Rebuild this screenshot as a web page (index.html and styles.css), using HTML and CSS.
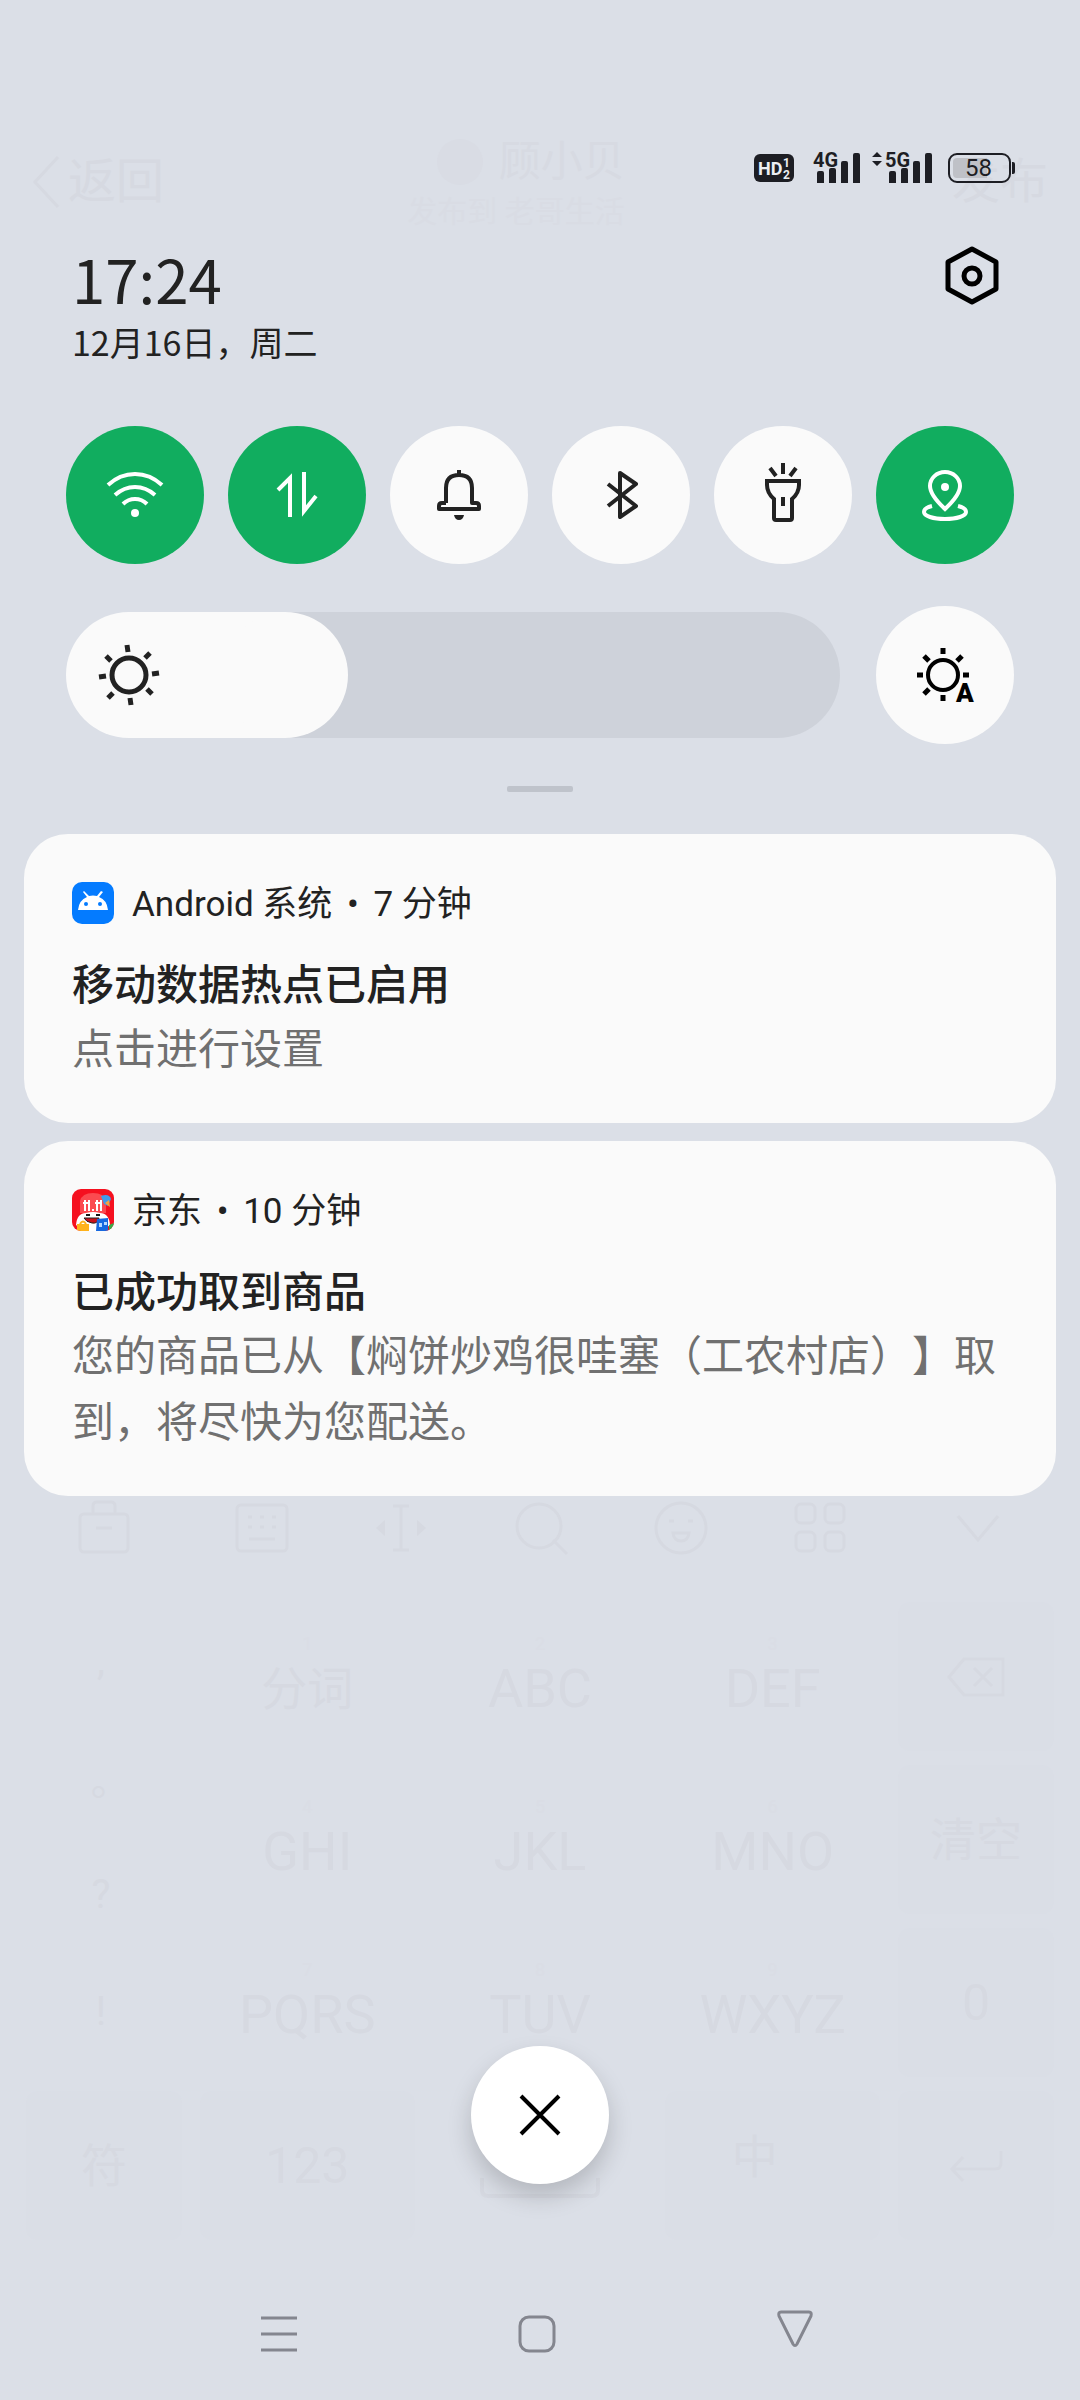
FILE: index.html
```html
<!DOCTYPE html>
<html lang="zh-CN">
<head>
<meta charset="utf-8">
<meta name="viewport" content="width=device-width, initial-scale=1">
<title>通知中心</title>
<link rel="stylesheet" href="styles.css">
</head>
<body>
<div class="screen">

  <!-- The app behind the shade, almost fully veiled -->
  <div class="underlay" aria-hidden="true">
    <div class="app-bar">
      <div class="app-back">
        <svg width="28" height="54" viewBox="0 0 28 54"><path d="M26 2L3 27l23 25" fill="none" stroke="currentColor" stroke-width="3"/></svg>
        <span>返回</span>
      </div>
      <div class="app-title">
        <div class="app-name"><span class="avatar"></span><span>顾小贝</span></div>
        <div class="app-sub">发布到 老哥生活</div>
      </div>
      <div class="app-post">发布</div>
    </div>

    <div class="keyboard">
      <div class="tools">
        <svg viewBox="0 0 56 56"><rect x="4" y="14" width="48" height="38" rx="4"/><path d="M17 14V6q0-4 4-4h14q4 0 4 4v8M20 28h16"/></svg>
        <svg viewBox="0 0 56 56"><rect x="3" y="5" width="50" height="46" rx="4"/><path d="M14 17h4M26 17h4M38 17h4M14 27h4M26 27h4M38 27h4M15 39h26"/></svg>
        <svg viewBox="0 0 56 56"><path d="M20 6h16M28 6v44M20 50h16"/><path d="M12 20l-9 8 9 8zM44 20l9 8-9 8z" fill="currentColor" stroke="none"/></svg>
        <svg viewBox="0 0 56 56"><circle cx="26" cy="26" r="22"/><path d="M40 40l14 14"/></svg>
        <svg viewBox="0 0 56 56"><circle cx="28" cy="28" r="25"/><path d="M16 21h5M35 21h5M20 33h16q-1 8-8 8t-8-8z"/></svg>
        <svg viewBox="0 0 56 56"><rect x="4" y="4" width="19" height="19" rx="5"/><rect x="33" y="4" width="19" height="19" rx="5"/><rect x="4" y="32" width="19" height="19" rx="5"/><rect x="33" y="32" width="19" height="19" rx="5"/></svg>
        <svg viewBox="0 0 56 56"><path d="M8 16l20 24 20-24"/></svg>
      </div>
      <div class="keys">
        <div class="marks"><span>,</span><span>｡</span><span>?</span><span>!</span></div>
        <div class="key"><small>1</small><span class="han">分词</span></div>
        <div class="key"><small>2</small><span>ABC</span></div>
        <div class="key"><small>3</small><span>DEF</span></div>
        <div class="key dark"><svg width="60" height="42" viewBox="0 0 60 42"><path d="M18 3h39v36H18L3 21zM28 12l18 18M46 12L28 30" fill="none" stroke="currentColor" stroke-width="3"/></svg></div>
        <div class="key"><small>4</small><span>GHI</span></div>
        <div class="key"><small>5</small><span>JKL</span></div>
        <div class="key"><small>6</small><span>MNO</span></div>
        <div class="key dark han">清空</div>
        <div class="key"><small>7</small><span>PQRS</span></div>
        <div class="key"><small>8</small><span>TUV</span></div>
        <div class="key"><small>9</small><span>WXYZ</span></div>
        <div class="key dark num">0</div>
        <div class="key dark han">符</div>
        <div class="key dark num">123</div>
        <div class="key space"><svg width="120" height="20" viewBox="0 0 120 20"><path d="M2 0v12q0 6 6 6h104q6 0 6-6V0" fill="none" stroke="currentColor" stroke-width="4"/></svg></div>
        <div class="key dark han lang">中</div>
        <div class="key dark"><svg width="54" height="34" viewBox="0 0 54 34"><path d="M52 2v12q0 6-6 6H4M14 8L3 20l11 12" fill="none" stroke="currentColor" stroke-width="3"/></svg></div>
      </div>
    </div>
  </div>

  <main class="shade">
    <div class="status">
      <svg width="40" height="28" viewBox="0 0 40 28" role="img" aria-label="HD 1 2">
        <rect width="40" height="28" rx="6" fill="#1d1e24"/>
        <text x="4" y="21" font-size="18" class="glyph light">HD</text>
        <text x="29" y="13" font-size="12" class="glyph light">1</text>
        <text x="29" y="25" font-size="12" class="glyph light">2</text>
      </svg>
      <svg class="signal-a" width="47" height="34" viewBox="0 0 47 34" role="img" aria-label="4G">
        <text x="0" y="16" font-size="20" class="glyph">4G</text>
        <path d="M4 22q0-2 2-2h3q2 0 2 2v10H4zM16 19q0-2 2-2h3q2 0 2 2v13h-7zM28 12q0-2 2-2h3q2 0 2 2v20h-7zM40 4q0-2 2-2h3q2 0 2 2v28h-7z"/>
      </svg>
      <svg class="signal-b" width="60" height="34" viewBox="0 0 60 34" role="img" aria-label="5G">
        <path d="M5 1l5 5H0zM5 15l5-5H0z"/>
        <text x="13" y="16" font-size="20" class="glyph">5G</text>
        <path d="M17 22q0-2 2-2h3q2 0 2 2v10h-7zM29 19q0-2 2-2h3q2 0 2 2v13h-7zM41 12q0-2 2-2h3q2 0 2 2v20h-7zM53 4q0-2 2-2h3q2 0 2 2v28h-7z"/>
      </svg>
      <svg width="68" height="30" viewBox="0 0 68 30" role="img" aria-label="电量 58">
        <path d="M9 5h30v20H9q-4 0-4-4V9q0-4 4-4z" fill="#bfc1c7"/>
        <rect x="1" y="1" width="61" height="28" rx="8" fill="none" stroke="#1d1e24" stroke-width="2"/>
        <path d="M64 9h1q2 0 2 2v8q0 2-2 2h-1z"/>
        <text x="17" y="23" font-size="24" class="level">58</text>
      </svg>
    </div>

    <header class="clock">
      <div>
        <div class="time">17:24</div>
        <div class="date">12月16日，周二</div>
      </div>
      <button class="settings" aria-label="设置">
        <svg width="54" height="60" viewBox="0 0 54 60" fill="none" stroke="#000" stroke-width="5" stroke-linejoin="round"><path d="M27 4l24 13v27L27 57 3 44V17z"/><circle cx="27" cy="31" r="8"/></svg>
      </button>
    </header>

    <div class="tiles">
      <button class="tile on" aria-label="WLAN" aria-pressed="true">
        <svg viewBox="0 0 60 60" stroke-width="4"><path d="M3 20q12-11 27-11t27 11M10 30q9-8 20-8t20 8M18 39q5-5 12-5t12 5"/><circle cx="30" cy="48" r="4" fill="currentColor" stroke="none"/></svg>
      </button>
      <button class="tile on" aria-label="移动数据" aria-pressed="true">
        <svg viewBox="0 0 60 60" stroke-width="4" stroke-miterlimit="6"><path d="M23 52V13L11 25M37 7v39l12-15"/></svg>
      </button>
      <button class="tile" aria-label="响铃" aria-pressed="false">
        <svg viewBox="0 0 60 60" stroke-width="4" stroke-linejoin="round"><path d="M30 5v4M17 38V23q0-13 13-13t13 13v15h4q3 0 3 3v3H10v-3q0-3 3-3h4"/><path d="M25 50h10q-1 5-5 5t-5-5z" fill="currentColor" stroke="none"/></svg>
      </button>
      <button class="tile" aria-label="蓝牙" aria-pressed="false">
        <svg viewBox="0 0 60 60" stroke-width="4" stroke-linejoin="round"><path d="M17 19l28 22-16 11V8l16 11-28 22"/></svg>
      </button>
      <button class="tile" aria-label="手电筒" aria-pressed="false">
        <svg viewBox="0 0 60 60" stroke-width="4"><path d="M30-2V9M17 3l6 8M43 3l-6 8M14 16h32v4q0 8-7 14v19q0 2-2 2H23q-2 0-2-2V34q-7-6-7-14zM30 32v9"/></svg>
      </button>
      <button class="tile on" aria-label="定位" aria-pressed="true">
        <svg viewBox="0 0 60 60" stroke-width="4"><path d="M30 44Q15 30 15 21a15 14 0 0 1 30 0q0 9-15 23zM17 41q-8 2-8 6c0 4 9 7 21 7s21-3 21-7q0-4-8-6"/><circle cx="30" cy="22" r="4" fill="currentColor" stroke="none"/></svg>
      </button>
    </div>

    <div class="brightness">
      <label class="slider">
        <svg viewBox="0 0 60 60" stroke-width="5" aria-hidden="true"><circle cx="30" cy="30" r="17"/><path d="M28 0l1 7M31 53l1 7M0 32l7-1M53 29l7-1M7 11l5 5M48 44l5 5M9 53l5-5M46 13l5-5"/></svg>
        <input type="range" min="0" max="100" value="24" aria-label="亮度">
      </label>
      <button class="tile auto" aria-label="自动亮度" aria-pressed="false">
        <svg viewBox="0 0 60 60" stroke-width="5"><circle cx="28" cy="30" r="15" stroke-width="4"/><path d="M28 3v6M28 50v6M2 30h6M48 30h6M9 11l5 5M9 49l5-5M47 11l-5 5"/><text x="41" y="57" font-size="26" class="mode">A</text></svg>
      </button>
    </div>

    <div class="handle"></div>

    <section class="cards">
      <article class="card">
        <div class="card-head">
          <svg width="42" height="42" viewBox="0 0 42 42" aria-hidden="true">
            <rect width="42" height="42" rx="10" fill="#047bff"/>
            <path d="M6 28q1-10 9-13l-4-5 1-1 5 5q4-1 8 0l4-5 2 1-4 5q8 3 9 13z" fill="#fff"/>
            <circle cx="14" cy="22" r="2" fill="#047bff"/><circle cx="28" cy="22" r="2" fill="#047bff"/>
          </svg>
          <span class="source">Android 系统 <span class="dot">•</span> 7 分钟</span>
        </div>
        <h2>移动数据热点已启用</h2>
        <p>点击进行设置</p>
      </article>
      <article class="card">
        <div class="card-head">
          <svg width="42" height="42" viewBox="0 0 42 42" aria-hidden="true">
            <clipPath id="jd"><rect width="42" height="42" rx="9"/></clipPath>
            <g clip-path="url(#jd)">
              <rect width="42" height="42" fill="#f5101f"/>
              <path d="M8 24V12Q10 4 21 4t13 8v12z" fill="#fb4a50"/>
              <path d="M29 7q8-3 10 3l-3 7-4-2z" fill="#3f9bea"/><path d="M33 14l4-3 1 7z" fill="#f8a33c"/>
              <path d="M13 11v11M17 11v11M25 11v11M29 11v11M11 14h7M23 14h7M20 21h2" fill="none" stroke="#fff" stroke-width="2"/>
              <path d="M4 36q1-12 10-12 7-2 14 0 9 0 10 12l-8 6H12z" fill="#fff"/>
              <path d="M14 26h4M24 26h4" stroke="#181818" stroke-width="2"/>
              <path d="M12 29h15q-1 6-7 5t-8-5z" fill="#c9131c" stroke="#222"/>
              <path d="M5 35h12v7H5z" fill="#ffb31c"/><path d="M8 35q3-5 6 0" fill="none" stroke="#ffb31c" stroke-width="2"/>
              <path d="M25 30l11-1v13H24z" fill="#1769e0"/><path d="M27 34h3v4h-3zM32 33h3v3h-3z" fill="#b8d9ff"/>
              <path d="M37 36l5-2v8h-5z" fill="#35ad48"/>
            </g>
          </svg>
          <span class="source">京东 <span class="dot">•</span> 10 分钟</span>
        </div>
        <h2>已成功取到商品</h2>
        <p>您的商品已从【焖饼炒鸡很哇塞（工农村店）】取到，将尽快为您配送。</p>
      </article>
    </section>

    <button class="clear" aria-label="清除全部通知">
      <svg width="42" height="42" viewBox="0 0 42 42"><path d="M2 2l38 38M40 2L2 40" stroke="#000" stroke-width="4"/></svg>
    </button>

    <nav class="nav" aria-label="系统导航">
      <button aria-label="最近任务"><svg viewBox="0 0 36 42"><path d="M0 5h36M0 21h36M0 37h36"/></svg></button>
      <button aria-label="主屏幕"><svg viewBox="0 0 36 42"><rect x="1" y="4" width="34" height="34" rx="9"/></svg></button>
      <button aria-label="返回"><svg viewBox="0 0 36 42"><path d="M4-1h28q3 0 2 4L20 31q-2 3-4 0L2 3Q1-1 4-1z"/></svg></button>
    </nav>
  </main>
</div>
</body>
</html>
```
FILE: styles.css
```css
:root {
  --bg: #dbdfe7;
  --ghost: #d6d9e1;
  --surface: #fafafa;
  --accent: #11ad5f;
  --ink: #222;
}

* { box-sizing: border-box; }

body {
  margin: 0;
  background: var(--bg);
  color: var(--ink);
  font-family: Roboto, "Noto Sans CJK SC", sans-serif;
}

button {
  border: 0;
  padding: 0;
  background: none;
  color: inherit;
  font: inherit;
}

svg { display: block; overflow: visible; flex: none; }

/* Both layers share one grid cell */
.screen {
  display: grid;
  grid-template-columns: minmax(0, 1fr);
  min-height: 100vh;
}
.underlay, .shade {
  grid-area: 1 / 1;
  display: flex;
  flex-direction: column;
}

/* Veiled app */
.underlay {
  justify-content: space-between;
  padding: 132px 24px 160px;
  color: var(--ghost);
}
.app-bar {
  display: grid;
  grid-template-columns: 1fr auto 1fr;
  align-items: start;
  padding: 0 8px;
  font-size: 48px;
  line-height: 60px;
}
.app-back { display: flex; align-items: center; gap: 8px; padding-top: 20px; }
.app-post { text-align: right; padding-top: 20px; }
.app-title { margin-right: 48px; color: #d7dae2; }
.app-name { display: flex; align-items: center; justify-content: flex-end; gap: 16px; font-size: 42px; }
.avatar { width: 46px; height: 46px; border-radius: 50%; background: #d9dce4; }
.app-sub { font-size: 30px; line-height: 40px; color: #d9dce4; }

.tools {
  display: flex;
  justify-content: space-between;
  padding: 0 50px 46px 52px;
}
.tools svg {
  width: 56px;
  height: 56px;
  fill: none;
  stroke: currentColor;
  stroke-width: 3;
}
.tools svg:first-child { margin-right: 18px; }
.tools svg:last-child { margin-left: 18px; }
.keys {
  display: grid;
  grid-template-columns: 156px repeat(3, 1fr) 156px;
  grid-auto-rows: 149px;
  gap: 14px 18px;
  padding: 0 2px;
}
.marks {
  grid-row: span 3;
  display: grid;
  grid-auto-rows: 117px;
  justify-items: center;
  align-items: center;
  padding-right: 6px;
  font-size: 40px;
}
.key {
  display: flex;
  flex-direction: column;
  align-items: center;
  justify-content: center;
  border-radius: 12px;
  font-size: 54px;
  line-height: 66px;
}
.key small { font-size: 18px; line-height: 24px; color: #dadde5; }
.dark { background: #dadee6; }
.key .han, .key.han { font-size: 46px; }
.key.num { font-size: 50px; }
.key.space { justify-content: flex-end; padding-bottom: 42px; }
.key.lang { padding: 0 36px 18px 0; }

/* Shade */
.status {
  display: flex;
  justify-content: flex-end;
  align-items: center;
  height: 34px;
  margin: 151px 64px 0;
}
.status svg { fill: #1d1e24; }
.signal-a { margin-left: 19px; }
.signal-b { margin: 0 16px 0 12px; }
.glyph { font-family: Roboto, sans-serif; font-weight: 700; }
.light { fill: #eceef2; }
.level { font-family: Roboto, sans-serif; }

.clock {
  display: flex;
  justify-content: space-between;
  align-items: flex-start;
  padding: 60px 81px 0 72px;
  font-family: "Noto Sans CJK SC", sans-serif;
}
.time { font-size: 60px; line-height: 66px; }
.date { font-size: 34px; line-height: 62px; }
.settings { color: #000; }

.tiles, .brightness {
  display: flex;
  justify-content: space-between;
  align-items: center;
  padding: 0 66px;
}
.tiles { margin-top: 53px; }
.tile {
  display: grid;
  place-items: center;
  flex: none;
  width: 138px;
  height: 138px;
  border-radius: 50%;
  background: var(--surface);
}
.tile svg, .slider svg {
  width: 60px;
  height: 60px;
  fill: none;
  stroke: currentColor;
}
.tile.on { background: var(--accent); color: #fff; }
.tile.auto { color: #000; }
.tile .mode { font-family: Roboto, sans-serif; font-weight: 900; fill: #000; stroke: none; }

.brightness { gap: 36px; margin-top: 42px; }
.slider { position: relative; flex: 1; }
.slider svg {
  position: absolute;
  left: 33px;
  top: 33px;
  pointer-events: none;
}
.slider input {
  appearance: none;
  display: block;
  width: 100%;
  height: 126px;
  margin: 0;
  border-radius: 63px;
  background: linear-gradient(to right, var(--surface) calc(63px + (100% - 126px) * 0.24), #ced2da 0);
}
.slider input::-webkit-slider-thumb {
  appearance: none;
  width: 126px;
  height: 126px;
  border-radius: 50%;
  background: var(--surface);
}

.handle {
  align-self: center;
  width: 66px;
  height: 6px;
  margin-top: 42px;
  border-radius: 2px;
  background: #bfc3cb;
}

.cards {
  display: grid;
  gap: 18px;
  padding: 42px 24px 0;
}
.card {
  padding: 48px 48px 40px;
  border-radius: 44px;
  background: var(--surface);
}
.card-head {
  display: flex;
  align-items: flex-start;
  gap: 18px;
  height: 42px;
  margin-bottom: 31px;
}
.source { font-size: 35px; line-height: 46px; }
.dot { margin: 0 6px; }
.card h2 {
  margin: 0;
  font-size: 42px;
  font-weight: 500;
  line-height: 62px;
}
.card p {
  margin: 0;
  color: #707070;
  font-size: 42px;
  line-height: 66px;
  text-spacing-trim: space-all;
}

.clear {
  display: grid;
  place-items: center;
  align-self: center;
  width: 138px;
  height: 138px;
  margin-top: auto;
  border-radius: 50%;
  background: #fff;
  box-shadow: 0 12px 24px rgba(0, 0, 0, 0.18);
}

.nav {
  display: flex;
  justify-content: space-between;
  padding: 129px 267px 45px 261px;
}
.nav svg {
  width: 36px;
  height: 42px;
  fill: none;
  stroke: #84868f;
  stroke-width: 3;
}
```
